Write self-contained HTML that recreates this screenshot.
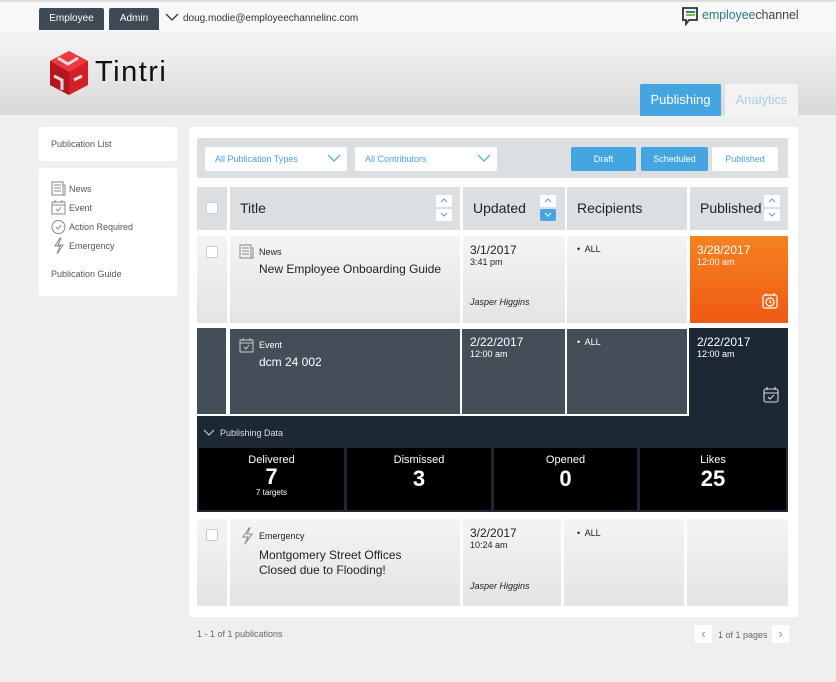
<!DOCTYPE html>
<html><head><meta charset="utf-8"><style>
*{box-sizing:border-box;margin:0;padding:0}
body{width:836px;height:682px;overflow:hidden;background:#efefef;font-family:"Liberation Sans",sans-serif;position:relative;color:#222}
.a{position:absolute}
.top{left:0;top:0;width:836px;height:31px;background:#f8f8f8;border-top:2px solid #ddd}
.btn{background:#3e4a55;color:#fff;font-size:10px;text-align:center;line-height:22px;top:8px;height:22px;border-radius:2px 2px 0 0}
.hdr{left:0;top:31px;width:836px;height:84px;background:linear-gradient(#f5f5f5,#d9d9d9)}
.card{background:#fff;border-radius:3px}
.side{font-size:9px;color:#555}
.hc{background:#dcdfe1;height:43px;top:187px;font-size:14px;color:#222;line-height:43px;padding-left:10px}
.lc{background:linear-gradient(#f4f4f4,#e2e4e5)}
.dc{background:#434e59;color:#fff;border:2px solid #fff}
.sort{width:16px;height:12px;background:#fff;border-radius:2px}
.cb{width:12px;height:12px;background:#fff;border:1px solid #ccc;border-radius:2px}
.date{font-size:12px;line-height:13px}
.time{font-size:9px}
.stat{background:#000;color:#fff;text-align:center;top:448px;height:62px}
</style></head><body>
<div class="a top"></div>
<div class="a btn" style="left:39px;width:65px">Employee</div>
<div class="a btn" style="left:109px;width:50px">Admin</div>
<svg class="a" style="left:165px;top:13px" width="14" height="9"><path d="M1 1l6 6 6-6" stroke="#333" stroke-width="1.3" fill="none"/></svg>
<div class="a" style="left:183px;top:13px;font-size:10px;color:#333">doug.modie@employeechannelinc.com</div>
<svg class="a" style="left:681px;top:6px" width="18" height="20"><path d="M2 2h14v12H8l-3 4v-4H2z" fill="none" stroke="#333" stroke-width="1.8"/><rect x="5" y="5" width="9" height="2" fill="#2a8a8a"/><rect x="5" y="8" width="9" height="2" fill="#8cba32"/></svg>
<div class="a" style="left:702px;top:8px;font-size:12.5px;color:#2d7a85;letter-spacing:-.1px">employee<span style="color:#444">channel</span></div>
<div class="a hdr"></div>
<svg class="a" style="left:48px;top:50px" width="42" height="46" viewBox="0 0 42 46"><path d="M21 1L40 11v24L21 45 2 35V11z" fill="#d41f26"/><path d="M21 1L40 11 21 22 2 11z" fill="#ee3a3f"/><path d="M21 22V45L2 35V11z" fill="#b3161c"/><path d="M10 8l10 6 10-6M6 26l8 4v10M26 30l8-4" stroke="#ddd" stroke-width="3" fill="none"/></svg>
<div class="a" style="left:95px;top:56px;font-size:29px;color:#111;letter-spacing:1.5px">Tintri</div>
<div class="a" style="left:640px;top:84px;width:81px;height:32px;background:#45a5e0;color:#fff;font-size:13px;text-align:center;line-height:32px;border-radius:2px 2px 0 0">Publishing</div>
<div class="a" style="left:725px;top:84px;width:73px;height:31px;background:#f3f3f3;color:#a9cfe9;font-size:13px;text-align:center;line-height:31px">Analytics</div>

<div class="a card side" style="left:39px;top:127px;width:138px;height:34px;padding:12px 12px">Publication List</div>
<div class="a card side" style="left:39px;top:168px;width:138px;height:128px"></div>
<svg class="a" style="left:51px;top:181px" width="16" height="76" fill="none" stroke="#888" stroke-width="1"><rect x="1" y="1" width="11" height="13"/><path d="M3 4h7M3 7h7M3 10h7M12 4h2v10h-2"/><rect x="1" y="21" width="13" height="12"/><path d="M1 24h13M4 19v3M11 19v3M5 28l2 2 3-4"/><circle cx="7.5" cy="46" r="6.5"/><path d="M5 46l2 2 3-4"/><path d="M9 57l-5 8h5l-3 8 6-9H7l3-7z"/></svg>
<div class="a side" style="left:69px;top:180px;line-height:19px">News<br>Event<br>Action Required<br>Emergency</div>
<div class="a side" style="left:51px;top:269px">Publication Guide</div>

<div class="a card" style="left:189px;top:127px;width:609px;height:490px"></div>
<div class="a" style="left:197px;top:138px;width:591px;height:40px;background:#dcdfe1;border-radius:2px"></div>
<div class="a" style="left:205px;top:147px;width:142px;height:24px;background:#fff;border-radius:2px;font-size:9px;color:#4aa3df;line-height:24px;padding-left:10px">All Publication Types</div>
<div class="a" style="left:355px;top:147px;width:142px;height:24px;background:#fff;border-radius:2px;font-size:9px;color:#4aa3df;line-height:24px;padding-left:10px">All Contributors</div>
<svg class="a" style="left:327px;top:154px" width="14" height="9"><path d="M1 1l6 6 6-6" stroke="#4aa3df" fill="none" stroke-width="1.2"/></svg>
<svg class="a" style="left:477px;top:154px" width="14" height="9"><path d="M1 1l6 6 6-6" stroke="#4aa3df" fill="none" stroke-width="1.2"/></svg>
<div class="a" style="left:571px;top:147px;width:65px;height:24px;background:#45a5e0;color:#fff;font-size:9px;text-align:center;line-height:24px;border-radius:2px">Draft</div>
<div class="a" style="left:641px;top:147px;width:67px;height:24px;background:#45a5e0;color:#fff;font-size:9px;text-align:center;line-height:24px;border-radius:2px">Scheduled</div>
<div class="a" style="left:712px;top:147px;width:66px;height:24px;background:#fff;color:#4aa3df;font-size:9px;text-align:center;line-height:24px;border-radius:2px">Published</div>

<div class="a hc" style="left:197px;width:30px"></div><div class="a cb" style="left:206px;top:202px"></div>
<div class="a hc" style="left:230px;width:230px">Title</div>
<div class="a hc" style="left:463px;width:102px">Updated</div>
<div class="a hc" style="left:567px;width:120px">Recipients</div>
<div class="a hc" style="left:690px;width:98px">Published</div>
<svg class="a" style="left:436px;top:195px" width="16" height="28"><rect width="16" height="12" rx="2" fill="#fff"/><rect y="14" width="16" height="12" rx="2" fill="#fff"/><path d="M5 7l3-3 3 3M5 18l3 3 3-3" stroke="#4aa3df" fill="none"/></svg>
<svg class="a" style="left:540px;top:195px" width="16" height="28"><rect width="16" height="12" rx="2" fill="#fff"/><rect y="14" width="16" height="12" rx="2" fill="#45a5e0"/><path d="M5 7l3-3 3 3" stroke="#4aa3df" fill="none"/><path d="M5 18l3 3 3-3" stroke="#fff" fill="none"/></svg>
<svg class="a" style="left:764px;top:195px" width="16" height="28"><rect width="16" height="12" rx="2" fill="#fff"/><rect y="14" width="16" height="12" rx="2" fill="#fff"/><path d="M5 7l3-3 3 3M5 18l3 3 3-3" stroke="#4aa3df" fill="none"/></svg>

<!-- row1 -->
<div class="a lc" style="left:197px;top:236px;width:30px;height:87px"></div><div class="a cb" style="left:206px;top:246px"></div>
<div class="a lc" style="left:230px;top:236px;width:230px;height:87px"></div>
<svg class="a" style="left:239px;top:244px" width="16" height="16" fill="none" stroke="#888"><rect x="1" y="1" width="11" height="13"/><path d="M3 4h7M3 7h7M3 10h7M12 4h2v10h-2"/></svg>
<div class="a" style="left:259px;top:247px;font-size:9px">News</div>
<div class="a" style="left:259px;top:262px;font-size:12px">New Employee Onboarding Guide</div>
<div class="a lc" style="left:463px;top:236px;width:102px;height:87px"></div>
<div class="a" style="left:470px;top:244px"><div class="date">3/1/2017</div><div class="time">3:41 pm</div></div>
<div class="a" style="left:470px;top:297px;font-size:9px;font-style:italic">Jasper Higgins</div>
<div class="a lc" style="left:567px;top:236px;width:120px;height:87px"></div>
<div class="a" style="left:577px;top:244px;font-size:9px">•&nbsp; ALL</div>
<div class="a" style="left:690px;top:236px;width:98px;height:87px;background:linear-gradient(#f5821f,#f05a14)"></div>
<div class="a" style="left:697px;top:244px;color:#fff"><div class="date">3/28/2017</div><div class="time">12:00 am</div></div>
<svg class="a" style="left:761px;top:292px" width="18" height="18" fill="none" stroke="#fff" stroke-width="1.2"><rect x="2" y="3" width="14" height="13" rx="2"/><path d="M5 1v3M13 1v3"/><circle cx="9" cy="10" r="4"/><path d="M9 8v2l1.5 1"/></svg>

<!-- row2 expanded -->
<div class="a" style="left:197px;top:328px;width:591px;height:184px;background:#1c2834"></div>
<div class="a" style="left:197px;top:328px;width:31px;height:88px;background:#434e59;border-bottom:2px solid #fff;border-right:2px solid #fff"></div>
<div class="a dc" style="left:228px;top:327px;width:234px;height:89px"></div>
<svg class="a" style="left:239px;top:337px" width="16" height="16" fill="none" stroke="#ccc"><rect x="1" y="3" width="13" height="12"/><path d="M1 6h13M4 1v3M11 1v3M5 10l2 2 3-4"/></svg>
<div class="a" style="left:259px;top:340px;font-size:9px;color:#fff">Event</div>
<div class="a" style="left:259px;top:355px;font-size:12px;color:#fff">dcm 24 002</div>
<div class="a dc" style="left:460px;top:327px;width:107px;height:89px"></div>
<div class="a" style="left:470px;top:336px;color:#fff"><div class="date">2/22/2017</div><div class="time">12:00 am</div></div>
<div class="a dc" style="left:565px;top:327px;width:124px;height:89px"></div>
<div class="a" style="left:577px;top:337px;font-size:9px;color:#fff">•&nbsp; ALL</div>
<div class="a" style="left:697px;top:336px;color:#fff"><div class="date">2/22/2017</div><div class="time">12:00 am</div></div>
<svg class="a" style="left:762px;top:386px" width="18" height="18" fill="none" stroke="#ddd" stroke-width="1.1"><rect x="2" y="3" width="14" height="13" rx="2"/><path d="M2 7h14M5 1v3M13 1v3M6 11l2 2 4-4"/></svg>
<svg class="a" style="left:203px;top:429px" width="12" height="8"><path d="M1 1l5 5 5-5" stroke="#ddd" fill="none"/></svg>
<div class="a" style="left:220px;top:428px;font-size:9px;color:#ddd">Publishing Data</div>
<div class="a stat" style="left:199px;width:145px"><div style="font-size:11px;margin-top:6px">Delivered</div><div style="font-size:22px;font-weight:bold;line-height:22px">7</div><div style="font-size:8px">7 targets</div></div>
<div class="a stat" style="left:347px;width:144px"><div style="font-size:11px;margin-top:6px">Dismissed</div><div style="font-size:22px;font-weight:bold;line-height:26px">3</div></div>
<div class="a stat" style="left:494px;width:143px"><div style="font-size:11px;margin-top:6px">Opened</div><div style="font-size:22px;font-weight:bold;line-height:26px">0</div></div>
<div class="a stat" style="left:640px;width:146px"><div style="font-size:11px;margin-top:6px">Likes</div><div style="font-size:22px;font-weight:bold;line-height:26px">25</div></div>

<!-- row3 -->
<div class="a lc" style="left:197px;top:519px;width:30px;height:87px"></div><div class="a cb" style="left:206px;top:529px"></div>
<div class="a lc" style="left:230px;top:519px;width:230px;height:87px"></div>
<svg class="a" style="left:240px;top:527px" width="14" height="18" fill="none" stroke="#888"><path d="M9 1l-6 9h5l-3 7 7-10H7l3-6z"/></svg>
<div class="a" style="left:259px;top:531px;font-size:9px">Emergency</div>
<div class="a" style="left:259px;top:548px;font-size:12px;line-height:15px">Montgomery Street Offices<br>Closed due to Flooding!</div>
<div class="a lc" style="left:463px;top:519px;width:98px;height:87px"></div>
<div class="a" style="left:470px;top:527px"><div class="date">3/2/2017</div><div class="time">10:24 am</div></div>
<div class="a" style="left:470px;top:581px;font-size:9px;font-style:italic">Jasper Higgins</div>
<div class="a lc" style="left:564px;top:519px;width:120px;height:87px"></div>
<div class="a" style="left:577px;top:528px;font-size:9px">•&nbsp; ALL</div>
<div class="a lc" style="left:687px;top:519px;width:101px;height:87px"></div>

<div class="a" style="left:197px;top:629px;font-size:9px;color:#666">1 - 1 of 1 publications</div>
<div class="a" style="left:695px;top:625px;width:17px;height:18px;background:#fff;color:#4aa3df;text-align:center;font-size:13px;line-height:18px">‹</div>
<div class="a" style="left:718px;top:630px;font-size:9px;color:#666">1 of 1 pages</div>
<div class="a" style="left:772px;top:625px;width:17px;height:18px;background:#fff;color:#4aa3df;text-align:center;font-size:13px;line-height:18px">›</div>
</body></html>
